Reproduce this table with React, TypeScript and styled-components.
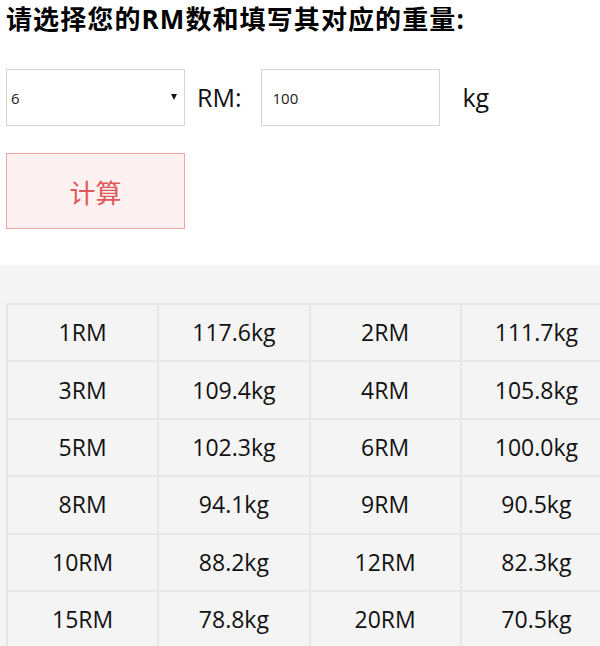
import React from "react";
import styled, { createGlobalStyle } from "styled-components";

const GlobalStyle = createGlobalStyle`
	html, body {
		margin: 0;
		padding: 0;
		background: #fff;
	}
	body {
		font-family: "Open Sans", "Noto Sans CJK SC", sans-serif;
		color: #111;
		overflow: hidden;
	}
`;

const Page = styled.div`
	width: 600px;
	height: 646px;
	display: flex;
	flex-direction: column;
`;

const FormArea = styled.div`
	padding: 0 6px;
`;

const Title = styled.h2`
	margin: 0;
	font-size: 26px;
	font-weight: 700;
	line-height: 38px;
	letter-spacing: 1.1px;
	color: #000;
	white-space: nowrap;
`;

const InputRow = styled.div`
	display: flex;
	align-items: center;
	margin-top: 31px;
`;

const SelectWrap = styled.div`
	position: relative;
	width: 179px;
	height: 57px;

	&::after {
		content: "";
		position: absolute;
		right: 8px;
		top: 25px;
		border-left: 3.5px solid transparent;
		border-right: 3.5px solid transparent;
		border-top: 6px solid #111;
		pointer-events: none;
	}
`;

const Select = styled.select`
	appearance: none;
	box-sizing: border-box;
	width: 100%;
	height: 100%;
	border: 1px solid #d5d5d5;
	border-radius: 0;
	background: #fff;
	padding: 0 0 0 4px;
	font-family: "Open Sans", "Noto Sans CJK SC", sans-serif;
	font-size: 15px;
	color: #222;
	outline: none;
`;

const Label = styled.span<{ $gap: number }>`
	margin-left: ${(p) => p.$gap}px;
	font-size: 25px;
	color: #111;
	line-height: 1;
`;

const TextInput = styled.input`
	box-sizing: border-box;
	width: 179px;
	height: 57px;
	margin-left: 20px;
	border: 1px solid #d5d5d5;
	padding: 0 0 0 10px;
	font-family: "Open Sans", "Noto Sans CJK SC", sans-serif;
	font-size: 15px;
	color: #222;
	outline: none;
`;

const CalcButton = styled.button`
	display: block;
	box-sizing: border-box;
	width: 179px;
	height: 76px;
	margin-top: 27px;
	border: 1px solid #f4a4a4;
	background: #fdf1f1;
	color: #e0595a;
	font-family: "Noto Sans CJK SC", sans-serif;
	font-size: 26px;
	padding: 0;
	cursor: pointer;
`;

const ResultArea = styled.div`
	flex: 1;
	margin-top: 36px;
	padding: 38px 0 0 6px;
	background: #f4f4f4;
	overflow: hidden;
`;

const Table = styled.table`
	width: 607px;
	border-collapse: collapse;
	table-layout: fixed;
`;

const Cell = styled.td`
	height: 55.4px;
	border: 2px solid #e7e7e7;
	text-align: center;
	font-size: 23px;
	line-height: 1;
	color: #111;
	padding: 0;
`;

const results: [string, string, string, string][] = [
	["1RM", "117.6kg", "2RM", "111.7kg"],
	["3RM", "109.4kg", "4RM", "105.8kg"],
	["5RM", "102.3kg", "6RM", "100.0kg"],
	["8RM", "94.1kg", "9RM", "90.5kg"],
	["10RM", "88.2kg", "12RM", "82.3kg"],
	["15RM", "78.8kg", "20RM", "70.5kg"]
];

const App = () => {
	return (
		<Page>
			<GlobalStyle />
			<FormArea>
				<Title>请选择您的RM数和填写其对应的重量:</Title>
				<InputRow>
					<SelectWrap>
						<Select defaultValue="6">
							{[1, 2, 3, 4, 5, 6, 8, 9, 10, 12, 15, 20].map((n) => (
								<option key={n} value={String(n)}>
									{n}
								</option>
							))}
						</Select>
					</SelectWrap>
					<Label $gap={12}>RM:</Label>
					<TextInput defaultValue="100" />
					<Label $gap={22}>kg</Label>
				</InputRow>
				<CalcButton>计算</CalcButton>
			</FormArea>
			<ResultArea>
				<Table>
					<tbody>
						{results.map((row, i) => (
							<tr key={i}>
								{row.map((v, j) => (
									<Cell key={j}>{v}</Cell>
								))}
							</tr>
						))}
					</tbody>
				</Table>
			</ResultArea>
		</Page>
	);
};

export default App;
